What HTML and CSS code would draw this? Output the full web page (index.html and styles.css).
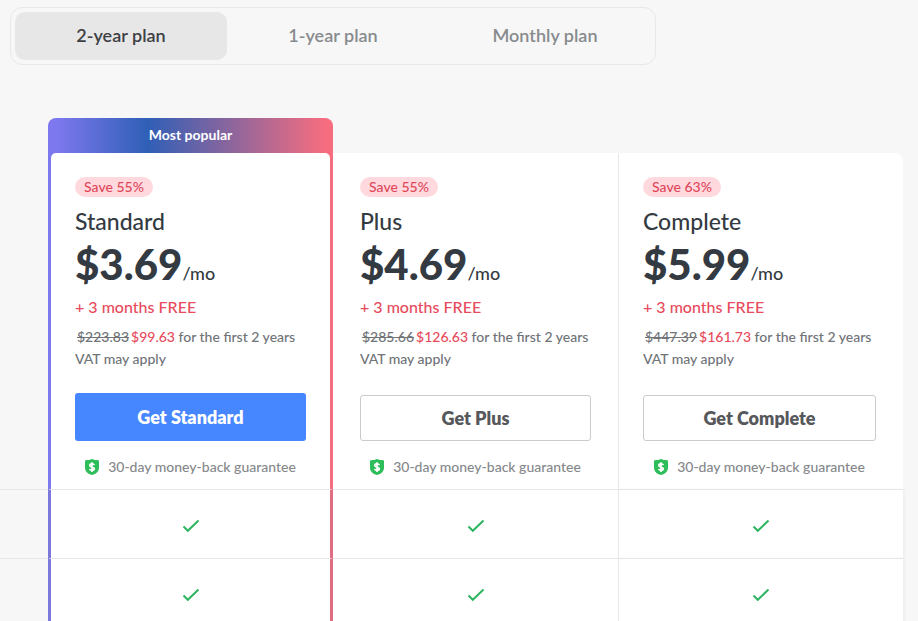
FILE: index.html
```
<!DOCTYPE html>
<html lang="en">
<head>
    <meta charset="UTF-8">
    <meta name="viewport" content="width=device-width, initial-scale=1.0">
    <title>Choose your plan</title>
    <link rel="stylesheet" href="styles.css">
</head>
<body>
    <!-- Icons shared by all plans -->
    <svg class="sprite" aria-hidden="true">
        <symbol id="shield" viewBox="0 0 14 16">
            <path fill="#2dbd5a" d="M7 0c1.800.8 3.800 1.200 6.200 1.200.5 0 .8.3.8.8v6.500c0 3.800-2.600 6.500-7 7.500-4.400-1-7-3.700-7-7.500V2c0-.5.3-.8.8-.8C3.200 1.200 5.200.8 7 0z"/>
            <path fill="none" stroke="#fff" stroke-width="1.700" d="M9.300 6.100C8.900 5.200 8.100 4.900 7 4.900c-1.400 0-2.200.6-2.200 1.500 0 2.200 4.500 1.100 4.500 3.300 0 1-.9 1.600-2.300 1.600-1.200 0-2.100-.4-2.500-1.300M7 3.200v9.800"/>
        </symbol>
        <symbol id="check" viewBox="0 0 18 14">
            <path fill="none" stroke="#2eb560" stroke-width="2" d="M1.500 7.500l4.300 4.300L16.500 1.500"/>
        </symbol>
    </svg>

    <div class="tabs" role="tablist">
        <button type="button" role="tab" class="tab active" aria-selected="true">2-year plan</button>
        <button type="button" role="tab" class="tab" aria-selected="false">1-year plan</button>
        <button type="button" role="tab" class="tab" aria-selected="false">Monthly plan</button>
    </div>

    <table class="plans">
        <colgroup>
            <col class="col-feature">
            <col>
            <col>
            <col>
        </colgroup>
        <thead>
            <tr>
                <td></td>
                <th scope="col" class="popular">
                    <div class="banner">Most popular</div>
                    <div class="card">
                        <span class="badge">Save 55%</span>
                        <h2>Standard</h2>
                        <p class="price">$3.69<span>/mo</span></p>
                        <p class="free">+ 3 months FREE</p>
                        <p class="terms"><del>$223.83</del><strong>$99.63</strong> for the first 2 years<br>VAT may apply</p>
                        <button type="button" class="btn btn-primary">Get Standard</button>
                        <p class="guarantee"><svg><use href="#shield"/></svg>30-day money-back guarantee</p>
                    </div>
                </th>
                <th scope="col">
                    <div class="card">
                        <span class="badge">Save 55%</span>
                        <h2>Plus</h2>
                        <p class="price">$4.69<span>/mo</span></p>
                        <p class="free">+ 3 months FREE</p>
                        <p class="terms"><del>$285.66</del><strong>$126.63</strong> for the first 2 years<br>VAT may apply</p>
                        <button type="button" class="btn">Get Plus</button>
                        <p class="guarantee"><svg><use href="#shield"/></svg>30-day money-back guarantee</p>
                    </div>
                </th>
                <th scope="col" class="last">
                    <div class="card">
                        <span class="badge">Save 63%</span>
                        <h2>Complete</h2>
                        <p class="price">$5.99<span>/mo</span></p>
                        <p class="free">+ 3 months FREE</p>
                        <p class="terms"><del>$447.39</del><strong>$161.73</strong> for the first 2 years<br>VAT may apply</p>
                        <button type="button" class="btn">Get Complete</button>
                        <p class="guarantee"><svg><use href="#shield"/></svg>30-day money-back guarantee</p>
                    </div>
                </th>
            </tr>
        </thead>
        <tbody>
            <tr>
                <th scope="row"></th>
                <td class="popular"><svg class="check"><use href="#check"/></svg></td>
                <td><svg class="check"><use href="#check"/></svg></td>
                <td class="last"><svg class="check"><use href="#check"/></svg></td>
            </tr>
            <tr>
                <th scope="row"></th>
                <td class="popular"><svg class="check"><use href="#check"/></svg></td>
                <td><svg class="check"><use href="#check"/></svg></td>
                <td class="last"><svg class="check"><use href="#check"/></svg></td>
            </tr>
        </tbody>
    </table>
</body>
</html>
```
FILE: styles.css
```
* {
    margin: 0;
    padding: 0;
    box-sizing: border-box;
}

body {
    font-family: Lato, 'Liberation Sans', sans-serif;
    font-weight: 500;
    background: #f7f7f7;
    color: #343a42;
    padding: 7px 15px 0 0;
}

button {
    font-family: inherit;
    cursor: pointer;
}

.sprite {
    display: block;
    width: 0;
    height: 0;
}

/* Billing period */
.tabs {
    display: flex;
    max-width: 646px;
    margin-left: 10px;
    padding: 4px;
    border: 1px solid #e8e8e9;
    border-radius: 12px;
}

.tab {
    flex: 1;
    height: 48px;
    padding-bottom: 2px;
    border: none;
    border-radius: 10px;
    background: transparent;
    color: #888b8e;
    font-size: 18px;
    font-weight: 600;
}

.tab.active {
    background: #e7e7e8;
    color: #3c4043;
}

/* Plans table */
.plans {
    width: 100%;
    margin-top: 53px;
    table-layout: fixed;
    border-spacing: 0;
}

.col-feature {
    width: 48px;
}

thead th {
    vertical-align: bottom;
    text-align: left;
    font-weight: 500;
}

thead .popular {
    background: linear-gradient(90deg, #7d78ee 0%, #7d78ee 3%, #2f5fb6 35%, #f66d80 97%, #f66d80 100%);
    border-radius: 8px 8px 0 0;
}

.banner {
    height: 35px;
    line-height: 34px;
    color: #fff;
    font-size: 14px;
    font-weight: 700;
    text-align: center;
}

.card {
    padding: 24px 27px 12px;
    background: #fff;
}

.popular .card {
    margin: 0 3px;
    padding: 24px 24px 12px;
    border-radius: 5px 5px 0 0;
}

.last .card {
    padding-left: 24px;
    border-left: 1px solid #e6e6e6;
    border-top-right-radius: 8px;
}

.badge {
    display: block;
    width: 78px;
    height: 20px;
    border-radius: 10px;
    background: #ffd9de;
    color: #e0485a;
    font-size: 14px;
    line-height: 20px;
    text-align: center;
}

.card h2 {
    margin-top: 10px;
    font-size: 23px;
    font-weight: 500;
    line-height: 28px;
}

.price {
    margin-top: 5px;
    font-size: 42px;
    font-weight: 900;
    line-height: 48px;
}

.price span {
    font-size: 18px;
    font-weight: 500;
    line-height: 18px;
}

.free {
    margin-top: 8px;
    color: #e74b5c;
    font-size: 16px;
    line-height: 22px;
}

.terms {
    margin-top: 8px;
    color: #707377;
    font-size: 14px;
    line-height: 22px;
    white-space: nowrap;
}

.terms del {
    margin: 0 2px;
}

.terms strong {
    color: #e74b5c;
    font-weight: 500;
}

.btn {
    display: block;
    width: 100%;
    height: 46px;
    margin-top: 25px;
    border: 1px solid #c9cbcc;
    border-radius: 3px;
    background: #fff;
    color: #56585b;
    font-size: 18px;
    font-weight: 800;
}

.btn-primary {
    height: 48px;
    margin-top: 23px;
    border: none;
    background: #4686ff;
    color: #fff;
}

.guarantee {
    display: flex;
    align-items: center;
    justify-content: center;
    gap: 9px;
    margin-top: 16px;
    color: #85888b;
    font-size: 14px;
    line-height: 20px;
    white-space: nowrap;
}

.guarantee svg {
    width: 14px;
    height: 16px;
}

/* Feature rows */
tbody th,
tbody td {
    height: 69px;
    border-top: 1px solid #e6e6e6;
    text-align: center;
    vertical-align: middle;
}

tbody td {
    background: #fff;
}

tbody .popular {
    border-left: 3px solid #7d78dc;
    border-right: 3px solid #e26c82;
}

tbody .last {
    border-left: 1px solid #e6e6e6;
    box-shadow: 2px 0 3px rgba(0, 0, 0, 0.04);
}

.check {
    display: block;
    width: 18px;
    height: 14px;
    margin: 4px auto 0;
}
```
